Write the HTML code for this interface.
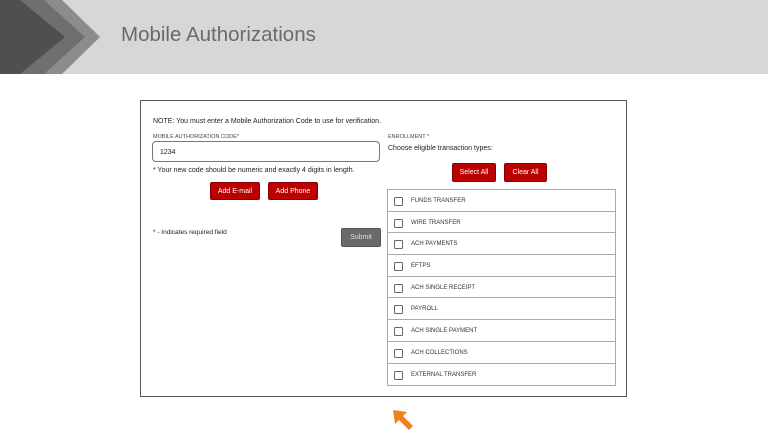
<!DOCTYPE html>
<html><head><style>
body{margin:0;width:768px;height:432px;background:#fff;position:relative;overflow:hidden;font-family:"Liberation Sans",sans-serif;}
.hdr{position:absolute;left:0;top:0;width:768px;height:74px;background:#d6d7d9;}
.title{position:absolute;left:121px;top:23px;font-size:20.5px;color:#6a6a6a;}
.box{position:absolute;left:140px;top:100px;width:485px;height:295px;border:1px solid #555;}
.t{position:absolute;white-space:nowrap;color:#222;}
.btn{position:absolute;background:#b00;color:#fff;font-size:7px;text-align:center;border-radius:2px;border:1px solid #800;box-sizing:border-box;}
.list{position:absolute;left:387px;top:189px;width:229px;border:1px solid #aaa;box-sizing:border-box;}
.row{height:21.7px;border-bottom:1px solid #aaa;box-sizing:border-box;position:relative;font-size:6px;color:#333;}
.row:last-child{border-bottom:none}
.row i{position:absolute;left:6px;top:7px;width:7px;height:7px;border:1px solid #666;border-radius:1.5px;}
.row span{position:absolute;left:23px;top:8px;}
</style></head><body>
<div class="hdr">
<svg width="110" height="74" style="position:absolute;left:0;top:0">
<polygon points="0,0 62,0 100,37 62,74 0,74" fill="#8c8c8c"/>
<polygon points="0,0 44,0 85,37 44,74 0,74" fill="#6f6f6f"/>
<polygon points="0,0 20,0 65,37 20,74 0,74" fill="#4f4f4f"/>
</svg>
<div class="title">Mobile Authorizations</div>
</div>
<div class="box"></div>
<div class="t" style="left:153px;top:118px;font-size:7px">NOTE: You must enter a Mobile Authorization Code to use for verification.</div>
<div class="t" style="left:153px;top:134px;font-size:5.5px;color:#444">MOBILE AUTHORIZATION CODE*</div>
<div style="position:absolute;left:152px;top:141px;width:228px;height:21px;border:1px solid #777;border-radius:4px;box-sizing:border-box"></div>
<div class="t" style="left:160px;top:149px;font-size:7px">1234</div>
<div class="t" style="left:153px;top:167px;font-size:7px">* Your new code should be numeric and exactly 4 digits in length.</div>
<div class="btn" style="left:210px;top:182px;width:50px;height:18px;line-height:17px">Add E-mail</div>
<div class="btn" style="left:268px;top:182px;width:50px;height:18px;line-height:17px">Add Phone</div>
<div class="t" style="left:153px;top:229px;font-size:6.5px">* - Indicates required field</div>
<div class="btn" style="left:341px;top:228px;width:40px;height:19px;line-height:18px;background:#6a6a6a;border-color:#555;color:#ddd">Submit</div>
<div class="t" style="left:388px;top:134px;font-size:5.5px;color:#444">ENROLLMENT *</div>
<div class="t" style="left:388px;top:145px;font-size:7px">Choose eligible transaction types:</div>
<div class="btn" style="left:452px;top:163px;width:44px;height:19px;line-height:18px">Select All</div>
<div class="btn" style="left:504px;top:163px;width:43px;height:19px;line-height:18px">Clear All</div>
<div class="list">
<div class="row"><i></i><span>FUNDS TRANSFER</span></div>
<div class="row"><i></i><span>WIRE TRANSFER</span></div>
<div class="row"><i></i><span>ACH PAYMENTS</span></div>
<div class="row"><i></i><span>EFTPS</span></div>
<div class="row"><i></i><span>ACH SINGLE RECEIPT</span></div>
<div class="row"><i></i><span>PAYROLL</span></div>
<div class="row"><i></i><span>ACH SINGLE PAYMENT</span></div>
<div class="row"><i></i><span>ACH COLLECTIONS</span></div>
<div class="row"><i></i><span>EXTERNAL TRANSFER</span></div>
</div>
<svg width="24" height="24" style="position:absolute;left:392px;top:409px">
<polygon points="1,1 15,3 11,7 21,17 17,21 7,11 3,15" fill="#f08020"/>
</svg>
</body></html>
